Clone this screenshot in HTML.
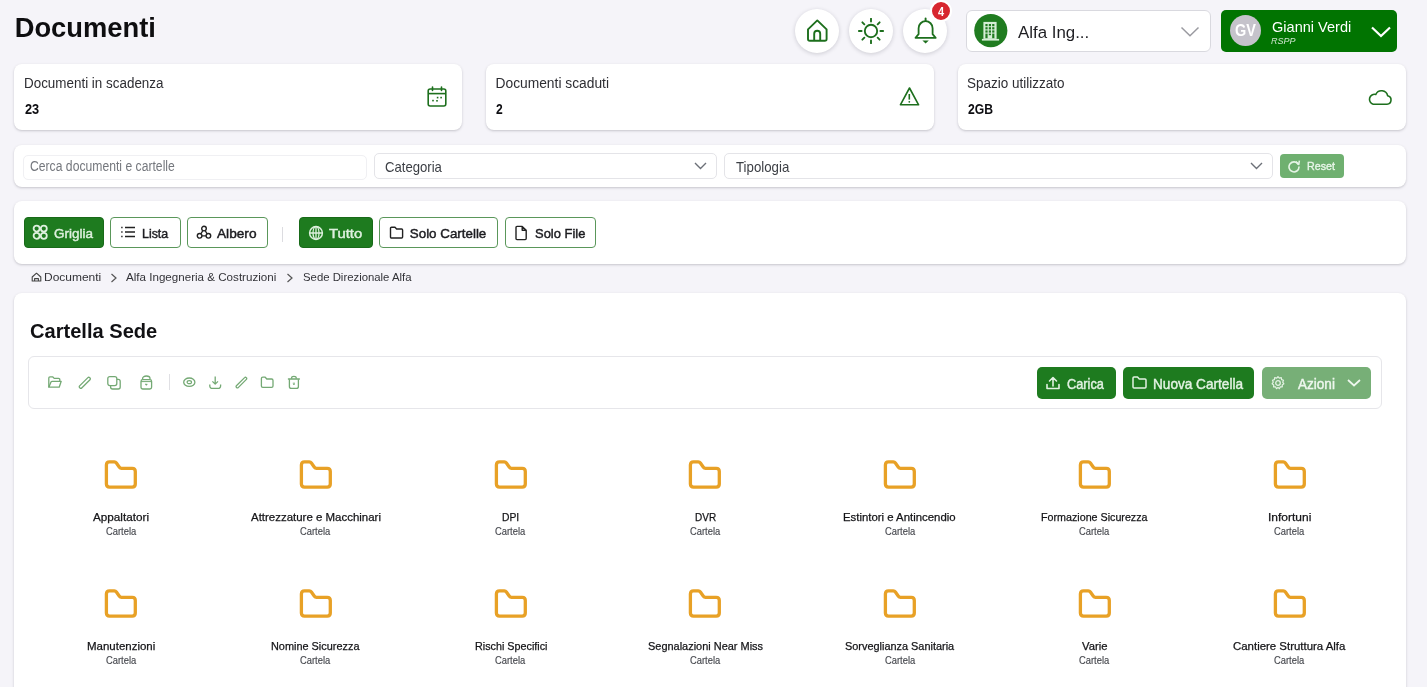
<!DOCTYPE html>
<html><head><meta charset="utf-8"><title>Documenti</title>
<style>
html,body{margin:0;padding:0;}
body{width:1427px;height:687px;overflow:hidden;position:relative;background:#f5f4f9;font-family:"Liberation Sans",sans-serif;}
.t{position:absolute;white-space:nowrap;transform-origin:0 0;}
.b{position:absolute;}
#wrap{position:absolute;left:0;top:0;width:1427px;height:687px;overflow:hidden;filter:blur(0.35px);}
</style></head><body><div id="wrap">
<div class="t" style="left:14.65px;top:13.87px;font-size:27.33px;line-height:27.33px;color:#0e0e10;font-weight:700;">Documenti</div>
<div class="b" style="left:795px;top:9px;width:44px;height:44px;background:#fff;border-radius:50%;box-shadow:0 1px 4px rgba(20,20,40,.18);"></div>
<div class="b" style="left:849px;top:9px;width:44px;height:44px;background:#fff;border-radius:50%;box-shadow:0 1px 4px rgba(20,20,40,.18);"></div>
<div class="b" style="left:903px;top:9px;width:44px;height:44px;background:#fff;border-radius:50%;box-shadow:0 1px 4px rgba(20,20,40,.18);"></div>
<svg class="b" style="left:800px;top:14px;" width="34" height="34" viewBox="0 0 34 34" fill="none"><path d="M8 15.4 L17.3 6.4 L26.6 15.4 V25 a1.8 1.8 0 0 1 -1.8 1.8 H9.8 a1.8 1.8 0 0 1 -1.8 -1.8 Z" stroke="#1d6f1d" stroke-width="1.9" stroke-linejoin="round"/><path d="M14.2 26.8 V19.8 a3 3 0 0 1 6 0 V26.8" stroke="#1d6f1d" stroke-width="1.9"/></svg>
<svg class="b" style="left:858px;top:18px;" width="26" height="26" viewBox="0 0 26 26" fill="none"><circle cx="13" cy="13" r="6.2" stroke="#1d6f1d" stroke-width="1.9"/><line x1="22.40" y1="13.00" x2="25.20" y2="13.00" stroke="#1d6f1d" stroke-width="1.9" stroke-linecap="round"/><line x1="19.65" y1="19.65" x2="21.63" y2="21.63" stroke="#1d6f1d" stroke-width="1.9" stroke-linecap="round"/><line x1="13.00" y1="22.40" x2="13.00" y2="25.20" stroke="#1d6f1d" stroke-width="1.9" stroke-linecap="round"/><line x1="6.35" y1="19.65" x2="4.37" y2="21.63" stroke="#1d6f1d" stroke-width="1.9" stroke-linecap="round"/><line x1="3.60" y1="13.00" x2="0.80" y2="13.00" stroke="#1d6f1d" stroke-width="1.9" stroke-linecap="round"/><line x1="6.35" y1="6.35" x2="4.37" y2="4.37" stroke="#1d6f1d" stroke-width="1.9" stroke-linecap="round"/><line x1="13.00" y1="3.60" x2="13.00" y2="0.80" stroke="#1d6f1d" stroke-width="1.9" stroke-linecap="round"/><line x1="19.65" y1="6.35" x2="21.63" y2="4.37" stroke="#1d6f1d" stroke-width="1.9" stroke-linecap="round"/></svg>
<svg class="b" style="left:911px;top:15px;" width="30" height="30" viewBox="0 0 30 30" fill="none"><path d="M4.5 22.8 L7.6 19.2 V13.2 a7 7 0 0 1 14 0 V19.2 L24.7 22.8 Z" stroke="#1d6f1d" stroke-width="1.8" stroke-linejoin="round"/><path d="M14.6 3.4 V6" stroke="#1d6f1d" stroke-width="1.9" stroke-linecap="round"/><path d="M11.4 25.4 H17.8 L14.6 28.4 Z" fill="#1d6f1d"/></svg>
<div class="b" style="left:930px;top:0px;width:22px;height:22px;background:#d7262f;border-radius:50%;border:2px solid #fff;box-sizing:border-box;"></div>
<div class="t" style="left:937.80px;top:5.28px;font-size:13.37px;line-height:13.37px;color:#fff;font-weight:700;transform:scaleX(0.8250);">4</div>
<div class="b" style="left:966px;top:10px;width:245px;height:42px;background:#fff;border:1px solid #d9d9df;border-radius:6px;box-sizing:border-box;"></div>
<svg class="b" style="left:970px;top:10px;" width="44" height="44" viewBox="0 0 44 44" fill="none"><circle cx="20.8" cy="20.6" r="16.6" fill="#207c20"/><rect x="13.4" y="11.9" width="13.2" height="17" fill="#d6eed6"/><rect x="15.4" y="14.0" width="2.2" height="2.2" fill="#1f7a1f"/><rect x="15.4" y="17.2" width="2.2" height="2.2" fill="#1f7a1f"/><rect x="15.4" y="20.4" width="2.2" height="2.2" fill="#1f7a1f"/><rect x="18.8" y="14.0" width="2.2" height="2.2" fill="#1f7a1f"/><rect x="18.8" y="17.2" width="2.2" height="2.2" fill="#1f7a1f"/><rect x="18.8" y="20.4" width="2.2" height="2.2" fill="#1f7a1f"/><rect x="22.2" y="14.0" width="2.2" height="2.2" fill="#1f7a1f"/><rect x="22.2" y="17.2" width="2.2" height="2.2" fill="#1f7a1f"/><rect x="22.2" y="20.4" width="2.2" height="2.2" fill="#1f7a1f"/><rect x="15.4" y="23.6" width="2.2" height="4.6" fill="#1f7a1f"/><rect x="22.2" y="23.6" width="2.2" height="4.6" fill="#1f7a1f"/><rect x="18.8" y="23.6" width="2.2" height="1.6" fill="#1f7a1f"/><rect x="11.9" y="28.9" width="17.2" height="1.7" fill="#d6eed6"/></svg>
<div class="t" style="left:1018.00px;top:24.73px;font-size:16.86px;line-height:16.86px;color:#1e1e22;">Alfa Ing...</div>
<svg class="b" style="left:1180px;top:26px;" width="20" height="12" viewBox="0 0 20 12" fill="none"><path d="M1.5 1.5 L10 9.8 L18.5 1.5" stroke="#9a9aa0" stroke-width="1.5"/></svg>
<div class="b" style="left:1221px;top:10px;width:176px;height:42px;background:#017401;border-radius:5px;"></div>
<div class="b" style="left:1230px;top:15px;width:31px;height:31px;background:#c5c3cb;border-radius:50%;"></div>
<div class="t" style="left:1234.60px;top:23.09px;font-size:15.84px;line-height:15.84px;color:#fff;font-weight:700;transform:scaleX(0.9130);">GV</div>
<div class="t" style="left:1271.60px;top:20.27px;font-size:14.10px;line-height:14.10px;color:#fff;transform:scaleX(1.0316);">Gianni Verdi</div>
<div class="t" style="left:1271.40px;top:35.63px;font-size:9.88px;line-height:9.88px;color:#cfe5cf;font-style:italic;transform:scaleX(0.9111);">RSPP</div>
<svg class="b" style="left:1370px;top:25px;" width="22" height="14" viewBox="0 0 22 14" fill="none"><path d="M2 2.5 L11 11 L20 2.5" stroke="#fff" stroke-width="2.2"/></svg>
<div class="b" style="left:14px;top:64px;width:448px;height:66px;background:#fff;border-radius:8px;box-shadow:0 1px 3px rgba(20,20,40,.16),0 1px 2px rgba(20,20,40,.06);"></div>
<div class="b" style="left:486px;top:64px;width:448px;height:66px;background:#fff;border-radius:8px;box-shadow:0 1px 3px rgba(20,20,40,.16),0 1px 2px rgba(20,20,40,.06);"></div>
<div class="b" style="left:958px;top:64px;width:448px;height:66px;background:#fff;border-radius:8px;box-shadow:0 1px 3px rgba(20,20,40,.16),0 1px 2px rgba(20,20,40,.06);"></div>
<div class="t" style="left:23.73px;top:76.51px;font-size:13.81px;line-height:13.81px;color:#2e2e33;transform:scaleX(0.9727);">Documenti in scadenza</div>
<div class="t" style="left:24.50px;top:103.01px;font-size:13.81px;line-height:13.81px;color:#0e0e12;font-weight:700;transform:scaleX(0.9267);">23</div>
<div class="t" style="left:495.50px;top:76.51px;font-size:13.81px;line-height:13.81px;color:#2e2e33;">Documenti scaduti</div>
<div class="t" style="left:496.20px;top:103.01px;font-size:13.81px;line-height:13.81px;color:#0e0e12;font-weight:700;transform:scaleX(0.8750);">2</div>
<div class="t" style="left:967.12px;top:76.51px;font-size:13.81px;line-height:13.81px;color:#2e2e33;transform:scaleX(0.9768);">Spazio utilizzato</div>
<div class="t" style="left:968.00px;top:103.01px;font-size:13.81px;line-height:13.81px;color:#0e0e12;font-weight:700;transform:scaleX(0.8821);">2GB</div>
<svg class="b" style="left:426px;top:85px;" width="22" height="23" viewBox="0 0 22 23" fill="none"><rect x="2.2" y="4" width="17.6" height="17" rx="2" stroke="#1d6f1d" stroke-width="1.6"/><path d="M2.2 8.6H19.8" stroke="#1d6f1d" stroke-width="1.6"/><path d="M6.5 2v3.5M15.5 2v3.5" stroke="#1d6f1d" stroke-width="1.6" stroke-linecap="round"/><rect x="10.8" y="11.8" width="1.6" height="1.6" fill="#1d6f1d"/><rect x="14.3" y="11.8" width="1.6" height="1.6" fill="#1d6f1d"/><rect x="6.2" y="14.8" width="1.6" height="1.6" fill="#1d6f1d"/><rect x="10.2" y="15" width="1.6" height="1.6" fill="#1d6f1d"/></svg>
<svg class="b" style="left:898px;top:86px;" width="23" height="21" viewBox="0 0 23 21" fill="none"><path d="M11.5 2 L20.6 18.8 H2.4 Z" stroke="#1d6f1d" stroke-width="1.6" stroke-linejoin="round"/><path d="M11.3 8v5.6" stroke="#1d6f1d" stroke-width="1.6"/><circle cx="11.3" cy="15.8" r="0.9" fill="#1d6f1d"/></svg>
<svg class="b" style="left:1366px;top:87px;" width="28" height="20" viewBox="0 0 28 20" fill="none"><path d="M7.2 17.2 H21 a4.3 4.3 0 0 0 0.6 -8.5 a6.2 6.2 0 0 0 -11.8 -1.2 a4.8 4.8 0 0 0 -2.6 9.7 Z" stroke="#1d6f1d" stroke-width="1.6" stroke-linejoin="round"/></svg>
<div class="b" style="left:14px;top:145px;width:1392px;height:42px;background:#fff;border-radius:8px;box-shadow:0 1px 3px rgba(20,20,40,.16),0 1px 2px rgba(20,20,40,.06);"></div>
<div class="b" style="left:23px;top:155px;width:344px;height:25px;background:#fff;border:1px solid #f0f0f3;border-radius:5px;box-sizing:border-box;"></div>
<div class="t" style="left:30.00px;top:160.39px;font-size:13.95px;line-height:13.95px;color:#74777d;transform:scaleX(0.8735);">Cerca documenti e cartelle</div>
<div class="b" style="left:374px;top:153px;width:343px;height:26px;background:#fff;border:1px solid #e4e4e8;border-radius:5px;box-sizing:border-box;"></div>
<div class="t" style="left:385.00px;top:159.83px;font-size:14.97px;line-height:14.97px;color:#3c3f45;transform:scaleX(0.8769);">Categoria</div>
<svg class="b" style="left:693px;top:161px;" width="15" height="10" viewBox="0 0 15 10" fill="none"><path d="M2 2 L7.5 7.5 L13 2" stroke="#6c7078" stroke-width="1.4"/></svg>
<div class="b" style="left:724px;top:153px;width:549px;height:26px;background:#fff;border:1px solid #e4e4e8;border-radius:5px;box-sizing:border-box;"></div>
<div class="t" style="left:735.50px;top:159.83px;font-size:14.97px;line-height:14.97px;color:#3c3f45;transform:scaleX(0.8852);">Tipologia</div>
<svg class="b" style="left:1249px;top:161px;" width="15" height="10" viewBox="0 0 15 10" fill="none"><path d="M2 2 L7.5 7.5 L13 2" stroke="#6c7078" stroke-width="1.4"/></svg>
<div class="b" style="left:1280px;top:154px;width:64px;height:24px;background:#6fb070;border-radius:4px;"></div>
<svg class="b" style="left:1287px;top:159px;" width="14" height="14" viewBox="0 0 14 14" fill="none"><path d="M11.2 5.2 A5 5 0 1 0 12 8" stroke="#e6f5e6" stroke-width="1.6" stroke-linecap="round"/><path d="M8.8 2.6 L11.8 5.4 L12.4 1.6" stroke="#e6f5e6" stroke-width="1.5" stroke-linejoin="round"/></svg>
<div class="t" style="left:1307.00px;top:159.96px;font-size:11.63px;line-height:11.63px;color:#e9f6e9;transform:scaleX(0.9226);-webkit-text-stroke:0.35px #e9f6e9;">Reset</div>
<div class="b" style="left:14px;top:201px;width:1392px;height:63px;background:#fff;border-radius:8px;box-shadow:0 1px 3px rgba(20,20,40,.16),0 1px 2px rgba(20,20,40,.06);"></div>
<div class="b" style="left:24px;top:217px;width:80px;height:31px;background:#1e7b1f;border:1px solid #186a19;border-radius:4px;box-sizing:border-box;"></div>
<div class="b" style="left:110px;top:217px;width:71px;height:31px;background:#fff;border:1px solid #5a975a;border-radius:4px;box-sizing:border-box;"></div>
<div class="b" style="left:187px;top:217px;width:81px;height:31px;background:#fff;border:1px solid #5a975a;border-radius:4px;box-sizing:border-box;"></div>
<div class="b" style="left:299px;top:217px;width:74px;height:31px;background:#1e7b1f;border:1px solid #186a19;border-radius:4px;box-sizing:border-box;"></div>
<div class="b" style="left:379px;top:217px;width:119px;height:31px;background:#fff;border:1px solid #5a975a;border-radius:4px;box-sizing:border-box;"></div>
<div class="b" style="left:505px;top:217px;width:91px;height:31px;background:#fff;border:1px solid #5a975a;border-radius:4px;box-sizing:border-box;"></div>
<div class="b" style="left:282px;top:227px;width:1px;height:15px;background:#dcdce0;"></div>
<svg class="b" style="left:32px;top:224px;" width="17" height="17" viewBox="0 0 17 17" fill="none"><circle cx="4.6" cy="4.6" r="3" stroke="#def0de" stroke-width="1.8"/><circle cx="11.8" cy="4.6" r="3" stroke="#def0de" stroke-width="1.8"/><circle cx="4.6" cy="11.8" r="3" stroke="#def0de" stroke-width="1.8"/><circle cx="11.8" cy="11.8" r="3" stroke="#def0de" stroke-width="1.8"/></svg>
<div class="t" style="left:53.70px;top:227.48px;font-size:13.37px;line-height:13.37px;color:#def0de;transform:scaleX(1.0077);-webkit-text-stroke:0.45px #def0de;">Griglia</div>
<svg class="b" style="left:120px;top:225px;" width="16" height="14" viewBox="0 0 16 14" fill="none"><path d="M5 2.5H15M5 7H15M5 11.5H15" stroke="#222" stroke-width="1.5"/><path d="M1.2 2.5H2.6M1.2 7H2.6M1.2 11.5H2.6" stroke="#222" stroke-width="1.5"/></svg>
<div class="t" style="left:141.70px;top:227.48px;font-size:13.37px;line-height:13.37px;color:#1c1c20;transform:scaleX(0.9276);-webkit-text-stroke:0.45px #1c1c20;">Lista</div>
<svg class="b" style="left:196px;top:225px;" width="16" height="15" viewBox="0 0 16 15" fill="none"><circle cx="8" cy="3.6" r="2.3" stroke="#222" stroke-width="1.4"/><circle cx="3.6" cy="10.8" r="2.3" stroke="#222" stroke-width="1.4"/><circle cx="12.4" cy="10.8" r="2.3" stroke="#222" stroke-width="1.4"/><path d="M6.9 5.6 L4.8 8.8 M9.1 5.6 L11.2 8.8 M5.9 10.8 H10.1" stroke="#222" stroke-width="1.3"/></svg>
<div class="t" style="left:217.30px;top:227.48px;font-size:13.37px;line-height:13.37px;color:#1c1c20;transform:scaleX(1.0231);-webkit-text-stroke:0.45px #1c1c20;">Albero</div>
<svg class="b" style="left:308px;top:225px;" width="16" height="16" viewBox="0 0 16 16" fill="none"><circle cx="8" cy="8" r="6.4" stroke="#def0de" stroke-width="1.5"/><path d="M1.6 8H14.4M8 1.6V14.4" stroke="#def0de" stroke-width="1.3"/><ellipse cx="8" cy="8" rx="3" ry="6.4" stroke="#def0de" stroke-width="1.3"/></svg>
<div class="t" style="left:329.10px;top:227.48px;font-size:13.37px;line-height:13.37px;color:#def0de;transform:scaleX(1.1100);-webkit-text-stroke:0.45px #def0de;">Tutto</div>
<svg class="b" style="left:389px;top:226px;" width="15" height="13" viewBox="0 0 15 13" fill="none"><path d="M1.5 2.2 a1 1 0 0 1 1 -1 H6 L7.6 3 H12.6 a1 1 0 0 1 1 1 V11 a1 1 0 0 1 -1 1 H2.5 a1 1 0 0 1 -1 -1 Z" stroke="#222" stroke-width="1.4" stroke-linejoin="round"/></svg>
<div class="t" style="left:409.80px;top:227.48px;font-size:13.37px;line-height:13.37px;color:#1c1c20;-webkit-text-stroke:0.45px #1c1c20;">Solo Cartelle</div>
<svg class="b" style="left:514px;top:225px;" width="14" height="16" viewBox="0 0 14 16" fill="none"><path d="M2 2.4 a1 1 0 0 1 1 -1 H8.2 L12.2 5.2 V13.6 a1 1 0 0 1 -1 1 H3 a1 1 0 0 1 -1 -1 Z M8.2 1.4 V5.2 H12.2" stroke="#222" stroke-width="1.4" stroke-linejoin="round"/></svg>
<div class="t" style="left:534.80px;top:227.48px;font-size:13.37px;line-height:13.37px;color:#1c1c20;transform:scaleX(0.9692);-webkit-text-stroke:0.45px #1c1c20;">Solo File</div>
<svg class="b" style="left:31px;top:272px;" width="11" height="10" viewBox="0 0 11 10" fill="none"><path d="M1.2 5 L5.5 1.2 L9.8 5 V9 H1.2 Z M3.6 9 V6.6 H7.4 V9" stroke="#444" stroke-width="1.1" stroke-linejoin="round"/></svg>
<div class="t" style="left:43.98px;top:271.33px;font-size:11.77px;line-height:11.77px;color:#333338;transform:scaleX(1.0182);">Documenti</div>
<svg class="b" style="left:110px;top:273px;" width="8" height="10" viewBox="0 0 8 10" fill="none"><path d="M1.5 1 L6 5 L1.5 9" stroke="#555" stroke-width="1.2"/></svg>
<div class="t" style="left:126.30px;top:271.33px;font-size:11.77px;line-height:11.77px;color:#333338;transform:scaleX(0.9862);">Alfa Ingegneria &amp; Costruzioni</div>
<svg class="b" style="left:286px;top:273px;" width="8" height="10" viewBox="0 0 8 10" fill="none"><path d="M1.5 1 L6 5 L1.5 9" stroke="#555" stroke-width="1.2"/></svg>
<div class="t" style="left:303.00px;top:271.33px;font-size:11.77px;line-height:11.77px;color:#333338;transform:scaleX(0.9646);">Sede Direzionale Alfa</div>
<div class="b" style="left:14px;top:293px;width:1392px;height:420px;background:#fff;border-radius:8px;box-shadow:0 1px 3px rgba(20,20,40,.16),0 1px 2px rgba(20,20,40,.06);"></div>
<div class="t" style="left:29.50px;top:320.98px;font-size:20.93px;line-height:20.93px;color:#111114;font-weight:700;transform:scaleX(0.9598);">Cartella Sede</div>
<div class="b" style="left:28px;top:356px;width:1354px;height:53px;background:#fff;border:1px solid #e6e6ea;border-radius:6px;box-sizing:border-box;"></div>
<svg class="b" style="left:47px;top:374px;" width="18" height="18" viewBox="0 0 18 18" fill="none"><path d="M1.8 13.2 V4 a1.2 1.2 0 0 1 1.2 -1.2 H5.6 L7.2 4.4 H11.6 a1.2 1.2 0 0 1 1.2 1.2 V7.4" stroke="#74a974" stroke-width="1.3" stroke-linejoin="round"/><path d="M1.8 13.2 L4 8 a1.2 1.2 0 0 1 1.1 -.7 H14.2 L12.2 13.2 Z" stroke="#74a974" stroke-width="1.3" stroke-linejoin="round"/></svg>
<svg class="b" style="left:77px;top:374px;" width="18" height="18" viewBox="0 0 18 18" fill="none"><path d="M2.6 13.6 a1.2 1.2 0 0 1 0 -1.7 L10.9 3.6 a1.2 1.2 0 0 1 1.7 0 l.4 .4 a1.2 1.2 0 0 1 0 1.7 L4.7 14 a1.2 1.2 0 0 1 -1.7 0 Z" stroke="#74a974" stroke-width="1.3" stroke-linejoin="round"/></svg>
<svg class="b" style="left:106px;top:374px;" width="18" height="18" viewBox="0 0 18 18" fill="none"><rect x="4.6" y="5.4" width="9.6" height="9.6" rx="2" stroke="#74a974" stroke-width="1.3"/><rect x="1.8" y="2.6" width="9" height="9" rx="2" fill="#fff" stroke="#74a974" stroke-width="1.3"/></svg>
<svg class="b" style="left:139px;top:374px;" width="18" height="18" viewBox="0 0 18 18" fill="none"><rect x="2" y="5.6" width="10.6" height="9.4" rx="1.8" stroke="#74a974" stroke-width="1.3"/><path d="M3.6 5.6 V4.6 a3.7 2.6 0 0 1 7.4 0 V5.6" stroke="#74a974" stroke-width="1.3"/><path d="M2 7.6 H12.6" stroke="#74a974" stroke-width="1"/><path d="M6.3 9.8 L7.3 10.9 L8.3 9.8" stroke="#74a974" stroke-width="1.1"/></svg>
<div class="b" style="left:169px;top:374px;width:1px;height:16px;background:#e0e0e4;"></div>
<svg class="b" style="left:182px;top:374px;" width="18" height="18" viewBox="0 0 18 18" fill="none"><ellipse cx="7.3" cy="8.2" rx="5.6" ry="4.2" stroke="#74a974" stroke-width="1.3"/><ellipse cx="7.3" cy="8.2" rx="2.2" ry="1.5" stroke="#74a974" stroke-width="1.2"/></svg>
<svg class="b" style="left:208px;top:374px;" width="18" height="18" viewBox="0 0 18 18" fill="none"><path d="M7.2 2.6 V10 M4.4 7.4 L7.2 10.1 L10 7.4" stroke="#74a974" stroke-width="1.3" stroke-linejoin="round"/><path d="M1.8 10.6 V12 a2.4 2.4 0 0 0 2.4 2.4 H10.2 a2.4 2.4 0 0 0 2.4 -2.4 V10.6" stroke="#74a974" stroke-width="1.3"/></svg>
<svg class="b" style="left:234px;top:374px;" width="18" height="18" viewBox="0 0 18 18" fill="none"><path d="M2.4 13.4 a1.1 1.1 0 0 1 0 -1.6 L10.6 3.6 a1.1 1.1 0 0 1 1.6 0 l.2 .2 a1.1 1.1 0 0 1 0 1.6 L4.2 13.6 a1.1 1.1 0 0 1 -1.6 0 Z" stroke="#74a974" stroke-width="1.3" stroke-linejoin="round"/></svg>
<svg class="b" style="left:259px;top:374px;" width="18" height="18" viewBox="0 0 18 18" fill="none"><path d="M2.4 4.6 a1.4 1.4 0 0 1 1.4 -1.4 H6.2 L7.8 5 H12.6 a1.4 1.4 0 0 1 1.4 1.4 V12 a1.4 1.4 0 0 1 -1.4 1.4 H3.8 a1.4 1.4 0 0 1 -1.4 -1.4 Z" stroke="#74a974" stroke-width="1.3" stroke-linejoin="round"/></svg>
<svg class="b" style="left:286px;top:374px;" width="18" height="18" viewBox="0 0 18 18" fill="none"><path d="M2.4 5 H13.4" stroke="#74a974" stroke-width="1.3" stroke-linecap="round"/><path d="M5.6 4.8 V3.8 a2.3 1.5 0 0 1 4.6 0 V4.8" stroke="#74a974" stroke-width="1.3"/><path d="M3.4 5.2 V12.4 a2 2 0 0 0 2 2 H10.4 a2 2 0 0 0 2 -2 V5.2" stroke="#74a974" stroke-width="1.3"/><path d="M6.8 9.2 H9 M7 10.4 H8.8" stroke="#74a974" stroke-width="0.9"/></svg>
<div class="b" style="left:1037px;top:367px;width:79px;height:32px;background:#1e7b1f;border-radius:5px;"></div>
<div class="b" style="left:1123px;top:367px;width:131px;height:32px;background:#1e7b1f;border-radius:5px;"></div>
<div class="b" style="left:1262px;top:367px;width:109px;height:32px;background:#77af77;border-radius:5px;"></div>
<svg class="b" style="left:1045px;top:375px;" width="16" height="16" viewBox="0 0 16 16" fill="none"><path d="M8 11 V2.5 M4.5 6 L8 2.5 L11.5 6 M2 9.5 V13.5 H14 V9.5" stroke="#e3f2e3" stroke-width="1.6" stroke-linejoin="round" stroke-linecap="round"/></svg>
<div class="t" style="left:1067.30px;top:377.03px;font-size:14.97px;line-height:14.97px;color:#e3f2e3;transform:scaleX(0.8523);-webkit-text-stroke:0.45px #e3f2e3;">Carica</div>
<svg class="b" style="left:1131px;top:375px;" width="17" height="15" viewBox="0 0 17 15" fill="none"><path d="M2 3 a1 1 0 0 1 1 -1 H6.5 L8.3 4 H14 a1 1 0 0 1 1 1 V12 a1 1 0 0 1 -1 1 H3 a1 1 0 0 1 -1 -1 Z" stroke="#e3f2e3" stroke-width="1.5" stroke-linejoin="round"/></svg>
<div class="t" style="left:1152.99px;top:377.03px;font-size:14.97px;line-height:14.97px;color:#e3f2e3;transform:scaleX(0.9091);-webkit-text-stroke:0.45px #e3f2e3;">Nuova Cartella</div>
<svg class="b" style="left:1270px;top:375px;" width="16" height="16" viewBox="0 0 16 16" fill="none"><circle cx="8" cy="8" r="2.3" stroke="#e3f2e3" stroke-width="1.3"/><path d="M8 1.6 L9.3 3.1 L11.3 2.6 L11.6 4.6 L13.5 5.3 L12.7 7.2 L13.9 8.8 L12.2 9.9 L12.3 11.9 L10.3 11.9 L9.3 13.7 L8 12.4 L6.5 13.7 L5.6 11.9 L3.6 11.9 L3.7 9.9 L2.1 8.8 L3.3 7.2 L2.5 5.3 L4.4 4.6 L4.7 2.6 L6.7 3.1 Z" stroke="#e3f2e3" stroke-width="1.2" stroke-linejoin="round"/></svg>
<div class="t" style="left:1297.80px;top:377.03px;font-size:14.97px;line-height:14.97px;color:#eef7ee;transform:scaleX(0.9049);-webkit-text-stroke:0.45px #eef7ee;">Azioni</div>
<svg class="b" style="left:1346px;top:378px;" width="16" height="10" viewBox="0 0 16 10" fill="none"><path d="M2 2 L8 7.5 L14 2" stroke="#eef7ee" stroke-width="1.7"/></svg>
<svg class="b" style="left:103px;top:458.0px;margin-left:0.00px;" width="36" height="33" viewBox="0 0 36 33" fill="none"><path d="M3.4 7 Q3.4 3.9 6.5 3.9 H11.3 Q12.6 3.9 13.4 5 L16.4 9.2 Q17.2 10.3 18.5 10.3 H29.2 Q32.3 10.3 32.3 13.4 V26.1 Q32.3 29.2 29.2 29.2 H6.5 Q3.4 29.2 3.4 26.1 Z" stroke="#e8a126" stroke-width="3.3" stroke-linejoin="round"/></svg>
<div class="t" style="left:92.80px;top:512.25px;font-size:11.05px;line-height:11.05px;color:#151518;transform:scaleX(1.0604);-webkit-text-stroke:0.25px #151518;">Appaltatori</div>
<div class="t" style="left:105.55px;top:526.53px;font-size:10.00px;line-height:10.00px;color:#45474d;transform:scaleX(0.9364);-webkit-text-stroke:0.15px #45474d;">Cartela</div>
<svg class="b" style="left:298px;top:458.0px;margin-left:-0.25px;" width="36" height="33" viewBox="0 0 36 33" fill="none"><path d="M3.4 7 Q3.4 3.9 6.5 3.9 H11.3 Q12.6 3.9 13.4 5 L16.4 9.2 Q17.2 10.3 18.5 10.3 H29.2 Q32.3 10.3 32.3 13.4 V26.1 Q32.3 29.2 29.2 29.2 H6.5 Q3.4 29.2 3.4 26.1 Z" stroke="#e8a126" stroke-width="3.3" stroke-linejoin="round"/></svg>
<div class="t" style="left:250.70px;top:512.25px;font-size:11.05px;line-height:11.05px;color:#151518;transform:scaleX(1.0376);-webkit-text-stroke:0.25px #151518;">Attrezzature e Macchinari</div>
<div class="t" style="left:300.30px;top:526.53px;font-size:10.00px;line-height:10.00px;color:#45474d;transform:scaleX(0.9364);-webkit-text-stroke:0.15px #45474d;">Cartela</div>
<svg class="b" style="left:492px;top:458.0px;margin-left:0.50px;" width="36" height="33" viewBox="0 0 36 33" fill="none"><path d="M3.4 7 Q3.4 3.9 6.5 3.9 H11.3 Q12.6 3.9 13.4 5 L16.4 9.2 Q17.2 10.3 18.5 10.3 H29.2 Q32.3 10.3 32.3 13.4 V26.1 Q32.3 29.2 29.2 29.2 H6.5 Q3.4 29.2 3.4 26.1 Z" stroke="#e8a126" stroke-width="3.3" stroke-linejoin="round"/></svg>
<div class="t" style="left:502.20px;top:512.25px;font-size:11.05px;line-height:11.05px;color:#151518;transform:scaleX(0.9333);-webkit-text-stroke:0.25px #151518;">DPI</div>
<div class="t" style="left:495.05px;top:526.53px;font-size:10.00px;line-height:10.00px;color:#45474d;transform:scaleX(0.9364);-webkit-text-stroke:0.15px #45474d;">Cartela</div>
<svg class="b" style="left:687px;top:458.0px;margin-left:0.25px;" width="36" height="33" viewBox="0 0 36 33" fill="none"><path d="M3.4 7 Q3.4 3.9 6.5 3.9 H11.3 Q12.6 3.9 13.4 5 L16.4 9.2 Q17.2 10.3 18.5 10.3 H29.2 Q32.3 10.3 32.3 13.4 V26.1 Q32.3 29.2 29.2 29.2 H6.5 Q3.4 29.2 3.4 26.1 Z" stroke="#e8a126" stroke-width="3.3" stroke-linejoin="round"/></svg>
<div class="t" style="left:695.00px;top:512.25px;font-size:11.05px;line-height:11.05px;color:#151518;transform:scaleX(0.9043);-webkit-text-stroke:0.25px #151518;">DVR</div>
<div class="t" style="left:689.80px;top:526.53px;font-size:10.00px;line-height:10.00px;color:#45474d;transform:scaleX(0.9364);-webkit-text-stroke:0.15px #45474d;">Cartela</div>
<svg class="b" style="left:882px;top:458.0px;margin-left:0.00px;" width="36" height="33" viewBox="0 0 36 33" fill="none"><path d="M3.4 7 Q3.4 3.9 6.5 3.9 H11.3 Q12.6 3.9 13.4 5 L16.4 9.2 Q17.2 10.3 18.5 10.3 H29.2 Q32.3 10.3 32.3 13.4 V26.1 Q32.3 29.2 29.2 29.2 H6.5 Q3.4 29.2 3.4 26.1 Z" stroke="#e8a126" stroke-width="3.3" stroke-linejoin="round"/></svg>
<div class="t" style="left:842.90px;top:512.25px;font-size:11.05px;line-height:11.05px;color:#151518;transform:scaleX(1.0300);-webkit-text-stroke:0.25px #151518;">Estintori e Antincendio</div>
<div class="t" style="left:884.55px;top:526.53px;font-size:10.00px;line-height:10.00px;color:#45474d;transform:scaleX(0.9364);-webkit-text-stroke:0.15px #45474d;">Cartela</div>
<svg class="b" style="left:1077px;top:458.0px;margin-left:-0.25px;" width="36" height="33" viewBox="0 0 36 33" fill="none"><path d="M3.4 7 Q3.4 3.9 6.5 3.9 H11.3 Q12.6 3.9 13.4 5 L16.4 9.2 Q17.2 10.3 18.5 10.3 H29.2 Q32.3 10.3 32.3 13.4 V26.1 Q32.3 29.2 29.2 29.2 H6.5 Q3.4 29.2 3.4 26.1 Z" stroke="#e8a126" stroke-width="3.3" stroke-linejoin="round"/></svg>
<div class="t" style="left:1040.60px;top:512.25px;font-size:11.05px;line-height:11.05px;color:#151518;transform:scaleX(0.9694);-webkit-text-stroke:0.25px #151518;">Formazione Sicurezza</div>
<div class="t" style="left:1079.30px;top:526.53px;font-size:10.00px;line-height:10.00px;color:#45474d;transform:scaleX(0.9364);-webkit-text-stroke:0.15px #45474d;">Cartela</div>
<svg class="b" style="left:1272px;top:458.0px;margin-left:-0.50px;" width="36" height="33" viewBox="0 0 36 33" fill="none"><path d="M3.4 7 Q3.4 3.9 6.5 3.9 H11.3 Q12.6 3.9 13.4 5 L16.4 9.2 Q17.2 10.3 18.5 10.3 H29.2 Q32.3 10.3 32.3 13.4 V26.1 Q32.3 29.2 29.2 29.2 H6.5 Q3.4 29.2 3.4 26.1 Z" stroke="#e8a126" stroke-width="3.3" stroke-linejoin="round"/></svg>
<div class="t" style="left:1267.70px;top:512.25px;font-size:11.05px;line-height:11.05px;color:#151518;transform:scaleX(1.0850);-webkit-text-stroke:0.25px #151518;">Infortuni</div>
<div class="t" style="left:1274.05px;top:526.53px;font-size:10.00px;line-height:10.00px;color:#45474d;transform:scaleX(0.9364);-webkit-text-stroke:0.15px #45474d;">Cartela</div>
<svg class="b" style="left:103px;top:587.3px;margin-left:0.00px;" width="36" height="33" viewBox="0 0 36 33" fill="none"><path d="M3.4 7 Q3.4 3.9 6.5 3.9 H11.3 Q12.6 3.9 13.4 5 L16.4 9.2 Q17.2 10.3 18.5 10.3 H29.2 Q32.3 10.3 32.3 13.4 V26.1 Q32.3 29.2 29.2 29.2 H6.5 Q3.4 29.2 3.4 26.1 Z" stroke="#e8a126" stroke-width="3.3" stroke-linejoin="round"/></svg>
<div class="t" style="left:86.70px;top:640.55px;font-size:11.05px;line-height:11.05px;color:#151518;transform:scaleX(1.0394);-webkit-text-stroke:0.25px #151518;">Manutenzioni</div>
<div class="t" style="left:105.55px;top:655.83px;font-size:10.00px;line-height:10.00px;color:#45474d;transform:scaleX(0.9364);-webkit-text-stroke:0.15px #45474d;">Cartela</div>
<svg class="b" style="left:298px;top:587.3px;margin-left:-0.25px;" width="36" height="33" viewBox="0 0 36 33" fill="none"><path d="M3.4 7 Q3.4 3.9 6.5 3.9 H11.3 Q12.6 3.9 13.4 5 L16.4 9.2 Q17.2 10.3 18.5 10.3 H29.2 Q32.3 10.3 32.3 13.4 V26.1 Q32.3 29.2 29.2 29.2 H6.5 Q3.4 29.2 3.4 26.1 Z" stroke="#e8a126" stroke-width="3.3" stroke-linejoin="round"/></svg>
<div class="t" style="left:270.90px;top:640.55px;font-size:11.05px;line-height:11.05px;color:#151518;transform:scaleX(0.9867);-webkit-text-stroke:0.25px #151518;">Nomine Sicurezza</div>
<div class="t" style="left:300.30px;top:655.83px;font-size:10.00px;line-height:10.00px;color:#45474d;transform:scaleX(0.9364);-webkit-text-stroke:0.15px #45474d;">Cartela</div>
<svg class="b" style="left:492px;top:587.3px;margin-left:0.50px;" width="36" height="33" viewBox="0 0 36 33" fill="none"><path d="M3.4 7 Q3.4 3.9 6.5 3.9 H11.3 Q12.6 3.9 13.4 5 L16.4 9.2 Q17.2 10.3 18.5 10.3 H29.2 Q32.3 10.3 32.3 13.4 V26.1 Q32.3 29.2 29.2 29.2 H6.5 Q3.4 29.2 3.4 26.1 Z" stroke="#e8a126" stroke-width="3.3" stroke-linejoin="round"/></svg>
<div class="t" style="left:474.50px;top:640.55px;font-size:11.05px;line-height:11.05px;color:#151518;transform:scaleX(0.9757);-webkit-text-stroke:0.25px #151518;">Rischi Specifici</div>
<div class="t" style="left:495.05px;top:655.83px;font-size:10.00px;line-height:10.00px;color:#45474d;transform:scaleX(0.9364);-webkit-text-stroke:0.15px #45474d;">Cartela</div>
<svg class="b" style="left:687px;top:587.3px;margin-left:0.25px;" width="36" height="33" viewBox="0 0 36 33" fill="none"><path d="M3.4 7 Q3.4 3.9 6.5 3.9 H11.3 Q12.6 3.9 13.4 5 L16.4 9.2 Q17.2 10.3 18.5 10.3 H29.2 Q32.3 10.3 32.3 13.4 V26.1 Q32.3 29.2 29.2 29.2 H6.5 Q3.4 29.2 3.4 26.1 Z" stroke="#e8a126" stroke-width="3.3" stroke-linejoin="round"/></svg>
<div class="t" style="left:647.80px;top:640.55px;font-size:11.05px;line-height:11.05px;color:#151518;transform:scaleX(0.9914);-webkit-text-stroke:0.25px #151518;">Segnalazioni Near Miss</div>
<div class="t" style="left:689.80px;top:655.83px;font-size:10.00px;line-height:10.00px;color:#45474d;transform:scaleX(0.9364);-webkit-text-stroke:0.15px #45474d;">Cartela</div>
<svg class="b" style="left:882px;top:587.3px;margin-left:0.00px;" width="36" height="33" viewBox="0 0 36 33" fill="none"><path d="M3.4 7 Q3.4 3.9 6.5 3.9 H11.3 Q12.6 3.9 13.4 5 L16.4 9.2 Q17.2 10.3 18.5 10.3 H29.2 Q32.3 10.3 32.3 13.4 V26.1 Q32.3 29.2 29.2 29.2 H6.5 Q3.4 29.2 3.4 26.1 Z" stroke="#e8a126" stroke-width="3.3" stroke-linejoin="round"/></svg>
<div class="t" style="left:845.00px;top:640.55px;font-size:11.05px;line-height:11.05px;color:#151518;transform:scaleX(0.9874);-webkit-text-stroke:0.25px #151518;">Sorveglianza Sanitaria</div>
<div class="t" style="left:884.55px;top:655.83px;font-size:10.00px;line-height:10.00px;color:#45474d;transform:scaleX(0.9364);-webkit-text-stroke:0.15px #45474d;">Cartela</div>
<svg class="b" style="left:1077px;top:587.3px;margin-left:-0.25px;" width="36" height="33" viewBox="0 0 36 33" fill="none"><path d="M3.4 7 Q3.4 3.9 6.5 3.9 H11.3 Q12.6 3.9 13.4 5 L16.4 9.2 Q17.2 10.3 18.5 10.3 H29.2 Q32.3 10.3 32.3 13.4 V26.1 Q32.3 29.2 29.2 29.2 H6.5 Q3.4 29.2 3.4 26.1 Z" stroke="#e8a126" stroke-width="3.3" stroke-linejoin="round"/></svg>
<div class="t" style="left:1081.60px;top:640.55px;font-size:11.05px;line-height:11.05px;color:#151518;transform:scaleX(1.0200);-webkit-text-stroke:0.25px #151518;">Varie</div>
<div class="t" style="left:1079.30px;top:655.83px;font-size:10.00px;line-height:10.00px;color:#45474d;transform:scaleX(0.9364);-webkit-text-stroke:0.15px #45474d;">Cartela</div>
<svg class="b" style="left:1272px;top:587.3px;margin-left:-0.50px;" width="36" height="33" viewBox="0 0 36 33" fill="none"><path d="M3.4 7 Q3.4 3.9 6.5 3.9 H11.3 Q12.6 3.9 13.4 5 L16.4 9.2 Q17.2 10.3 18.5 10.3 H29.2 Q32.3 10.3 32.3 13.4 V26.1 Q32.3 29.2 29.2 29.2 H6.5 Q3.4 29.2 3.4 26.1 Z" stroke="#e8a126" stroke-width="3.3" stroke-linejoin="round"/></svg>
<div class="t" style="left:1233.00px;top:640.55px;font-size:11.05px;line-height:11.05px;color:#151518;transform:scaleX(1.0339);-webkit-text-stroke:0.25px #151518;">Cantiere Struttura Alfa</div>
<div class="t" style="left:1274.05px;top:655.83px;font-size:10.00px;line-height:10.00px;color:#45474d;transform:scaleX(0.9364);-webkit-text-stroke:0.15px #45474d;">Cartela</div>
</div></body></html>
